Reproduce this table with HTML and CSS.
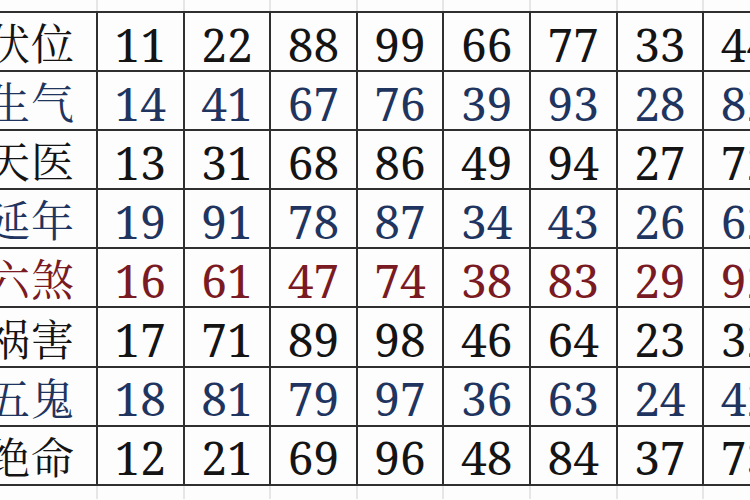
FILE: index.html
```html
<!DOCTYPE html>
<html>
<head>
<meta charset="utf-8">
<title>八星数字表</title>
<link rel="stylesheet" href="styles.css">
</head>
<body>
<div class="ghost ghost-top">
  <div></div><div></div><div></div><div></div><div></div><div></div><div></div><div></div><div></div>
</div>
<div class="grid">
  <div class="label k">伏位</div><div class="n k">11</div><div class="n k">22</div><div class="n k">88</div><div class="n k">99</div><div class="n k">66</div><div class="n k">77</div><div class="n k">33</div><div class="n k">44</div>
  <div class="label b">生气</div><div class="n b">14</div><div class="n b">41</div><div class="n b">67</div><div class="n b">76</div><div class="n b">39</div><div class="n b">93</div><div class="n b">28</div><div class="n b">82</div>
  <div class="label k">天医</div><div class="n k">13</div><div class="n k">31</div><div class="n k">68</div><div class="n k">86</div><div class="n k">49</div><div class="n k">94</div><div class="n k">27</div><div class="n k">72</div>
  <div class="label b">延年</div><div class="n b">19</div><div class="n b">91</div><div class="n b">78</div><div class="n b">87</div><div class="n b">34</div><div class="n b">43</div><div class="n b">26</div><div class="n b">62</div>
  <div class="label r">六煞</div><div class="n r">16</div><div class="n r">61</div><div class="n r">47</div><div class="n r">74</div><div class="n r">38</div><div class="n r">83</div><div class="n r">29</div><div class="n r">92</div>
  <div class="label k">祸害</div><div class="n k">17</div><div class="n k">71</div><div class="n k">89</div><div class="n k">98</div><div class="n k">46</div><div class="n k">64</div><div class="n k">23</div><div class="n k">32</div>
  <div class="label b">五鬼</div><div class="n b">18</div><div class="n b">81</div><div class="n b">79</div><div class="n b">97</div><div class="n b">36</div><div class="n b">63</div><div class="n b">24</div><div class="n b">42</div>
  <div class="label k">绝命</div><div class="n k">12</div><div class="n k">21</div><div class="n k">69</div><div class="n k">96</div><div class="n k">48</div><div class="n k">84</div><div class="n k">37</div><div class="n k">73</div>
</div>
<div class="ghost ghost-bottom">
  <div></div><div></div><div></div><div></div><div></div><div></div><div></div><div></div><div></div>
</div>
</body>
</html>
```
FILE: styles.css
```css
html, body {
  margin: 0;
  padding: 0;
  background: #fdfdfd;
  width: 750px;
  height: 500px;
  overflow: hidden;
}

.ghost {
  display: grid;
  grid-template-columns: 96px repeat(8, 84.6px);
  column-gap: 2px;
  background: #e6e6e6;
  width: max-content;
}
.ghost div {
  background: #fdfdfd;
}
.ghost-top {
  height: 11px;
}
.ghost-bottom {
  height: 13px;
}

.grid {
  display: grid;
  grid-template-columns: 96px repeat(8, 84.6px);
  grid-auto-rows: 57.1px;
  gap: 2px;
  padding: 2px 0;
  background: #2f2f2f;
  width: max-content;
}

.grid > div {
  background: #fdfdfd;
  display: flex;
  align-items: center;
  white-space: nowrap;
}

.label {
  justify-content: flex-end;
  padding-right: 21px;
  font-family: "Noto Serif CJK SC", "Noto Sans CJK SC", serif;
  font-size: 43px;
  letter-spacing: 1px;
  line-height: 1;
}

.n {
  justify-content: center;
  font-family: "Noto Serif", "Liberation Serif", serif;
  font-size: 46px;
  line-height: 1;
  padding-top: 4px;
}

.k { color: #141414; }
.b { color: #1f3560; }
.r { color: #7a1a22; }
```
